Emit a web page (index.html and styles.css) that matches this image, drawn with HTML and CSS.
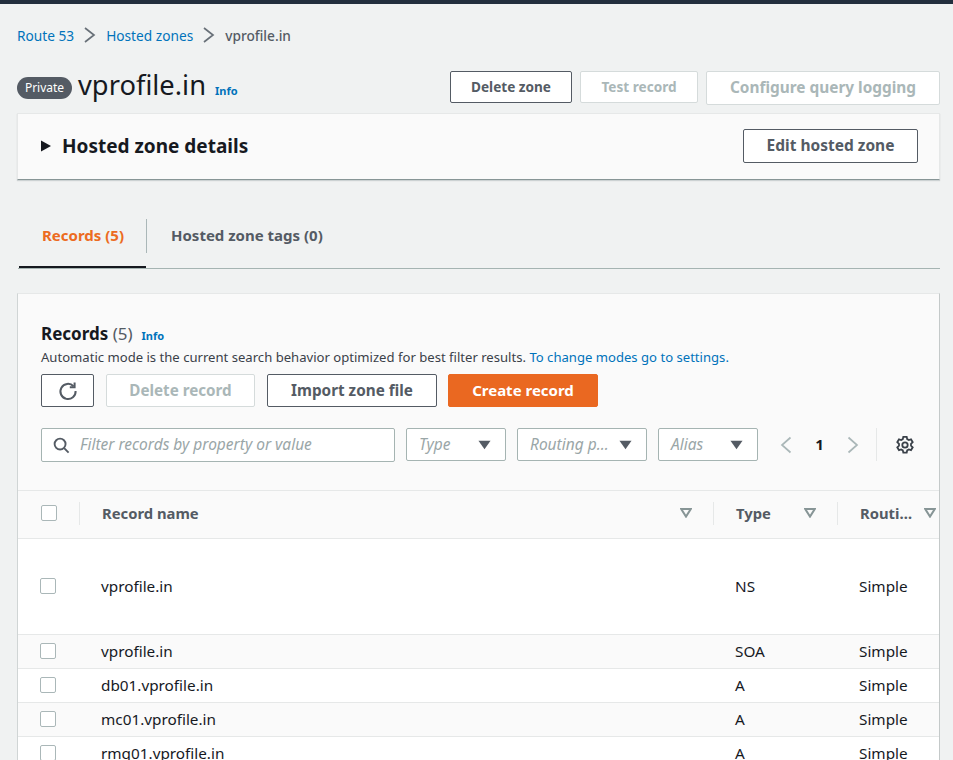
FILE: index.html
```html
<!DOCTYPE html>
<html lang="en">
<head>
<meta charset="utf-8">
<title>vprofile.in</title>
<link rel="stylesheet" href="styles.css">
</head>
<body>
<div class="topbar"></div>
<main class="main">
  <nav class="crumbs">
    <a class="link">Route 53</a>
    <svg class="crumb-sep" viewBox="0 0 12 16"><path d="M1 1 10 8 1 15"/></svg>
    <a class="link">Hosted zones</a>
    <svg class="crumb-sep" viewBox="0 0 12 16"><path d="M1 1 10 8 1 15"/></svg>
    <span class="crumb-current">vprofile.in</span>
  </nav>

  <header class="page-head">
    <span class="badge">Private</span>
    <h1 class="page-title">vprofile.in</h1>
    <a class="info info-title">Info</a>
    <div class="head-actions">
      <button class="btn btn-delete-zone">Delete zone</button>
      <button class="btn btn-off btn-test">Test record</button>
      <button class="btn btn-off btn-logging">Configure query logging</button>
    </div>
  </header>

  <section class="details">
    <svg class="caret" viewBox="0 0 10 12"><path d="M0 0.5 10 6 0 11.5Z"/></svg>
    <h2 class="details-title">Hosted zone details</h2>
    <button class="btn btn-edit">Edit hosted zone</button>
  </section>

  <div class="tabs">
    <div class="tab tab-active">Records (5)</div>
    <div class="tab tab-other">Hosted zone tags (0)</div>
  </div>

  <section class="panel">
    <div class="panel-head">
      <div class="panel-title-row">
        <h2 class="panel-title">Records <span class="count">(5)</span></h2>
        <a class="info">Info</a>
      </div>
      <p class="panel-desc">Automatic mode is the current search behavior optimized for best filter results. <a class="link">To change modes go to settings.</a></p>
      <div class="actions">
        <button class="btn btn-refresh" aria-label="Refresh">
          <svg class="refresh" viewBox="0 0 20 20"><path d="M15.5 5.2A7.6 7.6 0 1 0 17.6 10"/><path d="M16.6 1.4V6.2H11.8"/></svg>
        </button>
        <button class="btn btn-off btn-del-rec">Delete record</button>
        <button class="btn btn-import">Import zone file</button>
        <button class="btn btn-create">Create record</button>
      </div>
      <div class="filters">
        <div class="field search">
          <svg class="search-icon" viewBox="0 0 18 18"><circle cx="7.5" cy="7.5" r="5.8"/><path d="M11.8 11.8 16.5 16.5"/></svg>
          <span class="placeholder">Filter records by property or value</span>
        </div>
        <div class="field select sel-type"><span class="placeholder">Type</span><svg class="tri" viewBox="0 0 14 10"><path d="M0.5 0.5H13.5L7 9.5Z"/></svg></div>
        <div class="field select sel-routing"><span class="placeholder">Routing p…</span><svg class="tri" viewBox="0 0 14 10"><path d="M0.5 0.5H13.5L7 9.5Z"/></svg></div>
        <div class="field select sel-alias"><span class="placeholder">Alias</span><svg class="tri" viewBox="0 0 14 10"><path d="M0.5 0.5H13.5L7 9.5Z"/></svg></div>
        <div class="pager">
          <svg class="pg-arrow" viewBox="0 0 12 18"><path d="M10.5 1.5 2 9l8.5 7.5"/></svg>
          <span class="pg-num">1</span>
          <svg class="pg-arrow" viewBox="0 0 12 18"><path d="M1.5 1.5 10 9l-8.5 7.5"/></svg>
        </div>
        <div class="settings">
          <svg class="gear" viewBox="0 0 20 20"><path d="M8.3 1.8h3.4l.5 2.3 1.6.9 2.2-.7 1.7 2.9-1.7 1.6v1.900l1.700 1.600-1.700 2.900-2.200-.7-1.600.9-.5 2.300H8.300l-.5-2.300-1.600-.9-2.200.7-1.700-2.900 1.700-1.600V8.800L2.300 7.200 4 4.300l2.200.7 1.600-.9z"/><circle cx="10" cy="10" r="2.7"/></svg>
        </div>
      </div>
    </div>

    <div class="table">
      <div class="row row-head">
        <div class="cell cell-check cell-check-head"><span class="check"></span></div>
        <div class="cell cell-name th">Record name<svg class="sort" viewBox="0 0 12 10"><path d="M1.2 1H10.800L6 8.600Z"/></svg></div>
        <div class="cell cell-type th">Type<svg class="sort" viewBox="0 0 12 10"><path d="M1.2 1H10.800L6 8.600Z"/></svg></div>
        <div class="cell cell-route th">Routi…<svg class="sort" viewBox="0 0 12 10"><path d="M1.2 1H10.800L6 8.600Z"/></svg></div>
      </div>
      <div class="row row-tall">
        <div class="cell cell-check"><span class="check"></span></div>
        <div class="cell cell-name">vprofile.in</div><div class="cell cell-type">NS</div><div class="cell cell-route">Simple</div>
      </div>
      <div class="row row-alt">
        <div class="cell cell-check"><span class="check"></span></div>
        <div class="cell cell-name">vprofile.in</div><div class="cell cell-type">SOA</div><div class="cell cell-route">Simple</div>
      </div>
      <div class="row">
        <div class="cell cell-check"><span class="check"></span></div>
        <div class="cell cell-name">db01.vprofile.in</div><div class="cell cell-type">A</div><div class="cell cell-route">Simple</div>
      </div>
      <div class="row row-alt">
        <div class="cell cell-check"><span class="check"></span></div>
        <div class="cell cell-name">mc01.vprofile.in</div><div class="cell cell-type">A</div><div class="cell cell-route">Simple</div>
      </div>
      <div class="row">
        <div class="cell cell-check"><span class="check"></span></div>
        <div class="cell cell-name">rmq01.vprofile.in</div><div class="cell cell-type">A</div><div class="cell cell-route">Simple</div>
      </div>
    </div>
  </section>
</main>
</body>
</html>
```

FILE: styles.css
```css
* { box-sizing: border-box; }
html, body { margin: 0; height: 760px; overflow: hidden; }
body {
  background: #f0f2f2;
  color: #16191f;
  font-family: "Noto Sans", "Open Sans", sans-serif;
  font-size: 14px;
}
.topbar { height: 4px; background: #232f3e; }
.main { padding: 0 13px 0 17px; }
.link { color: #0073bb; }

.crumbs { display: flex; align-items: center; height: 20px; margin-top: 21px; margin-bottom: 20px; font-size: 13.7px; }
.crumb-sep { width: 12px; height: 16px; margin: 0 10px 0 10px; fill: none; stroke: #687078; stroke-width: 1.7; }
.crumb-current { color: #545b64; font-weight: 500; }

.page-head { display: flex; align-items: flex-start; height: 48px; }
.badge {
  margin-top: 12px; height: 22px; width: 55px; border-radius: 11px; background: #545b64; color: #fff;
  font-size: 12px; line-height: 21px; text-align: center;
}
.page-title { margin: 5px 0 0 6px; font-size: 27.3px; font-weight: 400; line-height: 30px; }
.info { color: #0073bb; font-size: 11px; font-weight: 700; }
.info-title { margin: 18px 0 0 9px; }
.head-actions { display: flex; gap: 8px; margin-top: 6px; margin-left: auto; }

.btn {
  display: block; height: 32px; padding: 0 0 2px; border: 1px solid #545b64; border-radius: 2px; background: #fff;
  color: #545b64; font-family: inherit; font-size: 13.6px; font-weight: 700; text-align: center;
}
.btn-off { border-color: #d5dbdb; color: #aab7b8; }
.btn-delete-zone { width: 122px; }
.btn-test { width: 118px; }
.btn-logging { width: 234px; height: 34px; font-size: 15.4px; }

.details {
  display: flex; align-items: center; height: 67px; padding: 0 21px 2px 23px; background: #fafafa;
  border: 1px solid #e6e8e8; border-bottom: 1px solid #879596; box-shadow: 0 1px 1px rgba(0,28,36,.15);
}
.caret { width: 10px; height: 12px; flex: none; fill: #16191f; }
.details-title { margin: 0 0 0 11px; font-size: 19px; font-weight: 700; }
.btn-edit { width: 175px; height: 34px; margin-left: auto; font-size: 15.5px; }

.tabs { display: flex; align-items: flex-start; height: 51px; margin: 38px 0 0 1px; border-bottom: 1px solid #a5b4b2; }
.tab { position: relative; display: flex; align-items: center; height: 34px; margin-top: 1px; padding-bottom: 3px; font-size: 15px; font-weight: 700; color: #545b64; }
.tab-active { width: 129px; padding-left: 24px; color: #ec6b21; border-right: 1px solid #aab7b8; }
.tab-active::after { content: ""; position: absolute; left: 1px; right: 0; bottom: -15px; height: 2px; background: #16191f; }
.tab-other { padding-left: 24px; }

.panel { margin: 24px 0 0; background: #fafafa; border: 1px solid #e6e8e8; border-left-color: #d0d5d5; border-right-color: #c4c9c9; border-bottom: 0; }
.panel-head { height: 196px; padding: 28px 0 0 23px; }
.panel-title-row { display: flex; align-items: baseline; height: 23px; }
.panel-title { margin: 0; font-size: 17px; font-weight: 700; line-height: 23px; }
.count { color: #545b64; font-weight: 400; }
.panel-title-row .info { margin-left: 9px; }
.panel-desc { margin: 4px 0 0; font-size: 13.1px; line-height: 17px; color: #3a4149; white-space: nowrap; }
.actions { display: flex; gap: 12px; margin-top: 8px; }
.btn-refresh { display: flex; align-items: center; justify-content: center; width: 53px; height: 33px; padding: 0; }
.refresh { width: 20px; height: 20px; fill: none; stroke: #545b64; stroke-width: 2; }
.btn-del-rec { width: 149px; height: 33px; font-size: 15.2px; }
.btn-import { width: 170px; height: 33px; font-size: 15.3px; }
.btn-create { width: 150px; height: 33px; margin-left: -1px; border-color: #ea6821; background: #ea6821; color: #fff; font-size: 15px; }

.filters { display: flex; align-items: flex-start; margin-top: 21px; }
.field { display: flex; align-items: center; height: 33px; background: #fff; border: 1px solid #a5b4b2; border-radius: 2px; }
.placeholder { padding-bottom: 2px; color: #9aa6a7; font-size: 15.5px; font-style: italic; white-space: nowrap; }
.search { width: 354px; height: 34px; padding-left: 11px; }
.search-icon { width: 17px; height: 17px; margin-right: 10px; fill: none; stroke: #545b64; stroke-width: 2; }
.select { justify-content: space-between; padding: 0 14px 0 12px; margin-left: 11px; }
.sel-type { width: 100px; }
.sel-routing { width: 130px; }
.sel-alias { width: 100px; }
.tri { width: 13px; height: 10px; flex: none; fill: #545b64; }
.pager { display: flex; align-items: center; height: 33px; width: 118px; padding-left: 22px; }
.pg-arrow { width: 12px; height: 18px; flex: none; fill: none; stroke: #aab7b8; stroke-width: 1.7; }
.pg-num { width: 55px; padding-bottom: 2px; text-align: center; font-weight: 700; font-size: 15px; }
.settings { display: flex; align-items: center; justify-content: flex-end; width: 39px; height: 33px; border-left: 1px solid #e6e8e8; }
.gear { width: 20px; height: 20px; fill: none; stroke: #3a4149; stroke-width: 1.8; }

.table { background: #fff; }
.row { display: grid; grid-template-columns: 61px 634px 124px 1fr; align-items: center; height: 34px; padding-bottom: 2px; border-top: 1px solid #e6e8e8; }
.row-head { height: 48px; padding-bottom: 3px; background: #fafafa; }
.row-tall { height: 96px; }
.row-alt { background: #fafafa; }
.cell { display: flex; align-items: center; padding-left: 22px; font-size: 15.3px; white-space: nowrap; overflow: hidden; }
.cell-check-head { padding-left: 23px; }
.check { display: block; width: 16px; height: 16px; background: #fff; border: 1px solid #aab7b8; border-radius: 2px; }
.th { height: 23px; border-left: 1px solid #e6e8e8; color: #545b64; font-weight: 700; justify-content: space-between; padding-right: 21px; font-size: 14.8px; }
.cell-route.th { padding-right: 3px; }
.sort { width: 12px; height: 10px; flex: none; fill: none; stroke: #879596; stroke-width: 2; }
```
